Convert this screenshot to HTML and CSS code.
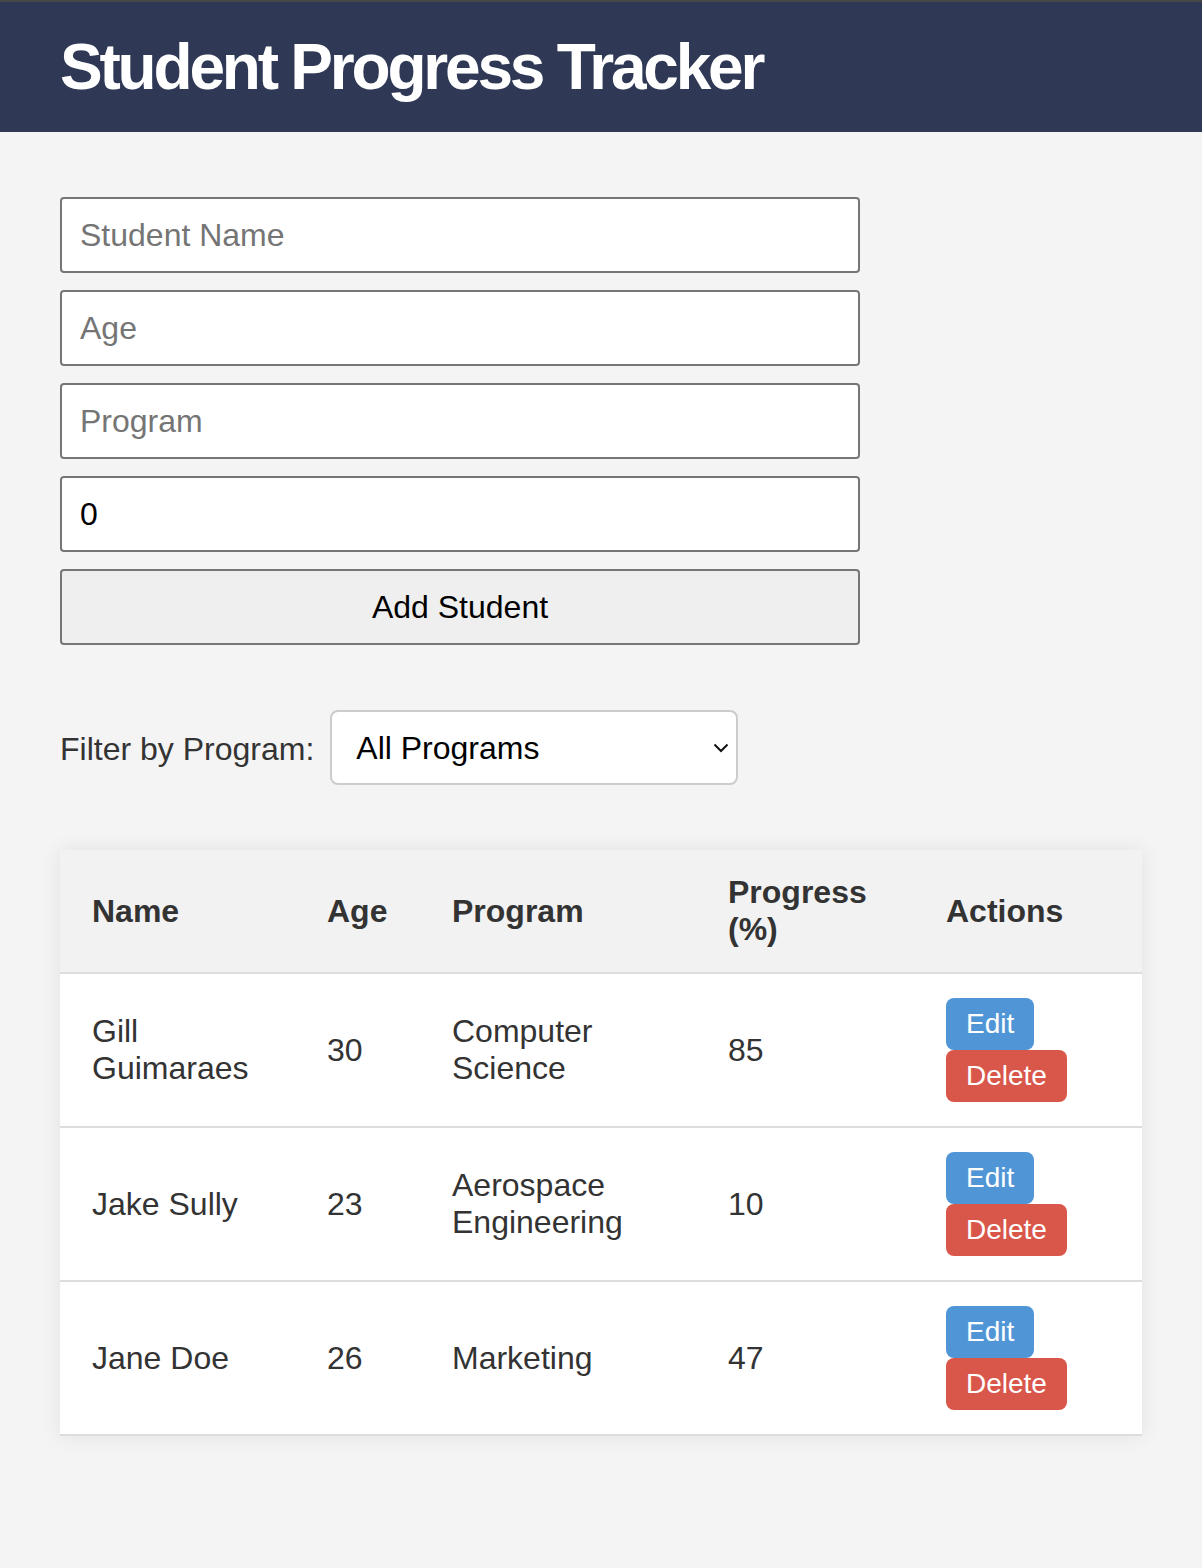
FILE: index.html
```html
<!DOCTYPE html>
<html lang="en">
<head>
<meta charset="utf-8">
<title>Student Progress Tracker</title>
<link rel="stylesheet" href="styles.css">
</head>
<body>
<header class="topbar">
  <h1 class="title">Student Progress Tracker</h1>
</header>
<main class="content">
  <form class="student-form">
    <input class="field" type="text" placeholder="Student Name">
    <input class="field" type="text" placeholder="Age">
    <input class="field" type="text" placeholder="Program">
    <input class="field" type="text" value="0">
    <button class="add-btn" type="button">Add Student</button>
  </form>
  <div class="filter">
    <label class="filter-label">Filter by Program:</label>
    <div class="select-wrap">
      <select class="select"><option>All Programs</option></select>
      <svg class="chevron" width="16" height="10" viewBox="0 0 16 10"><path d="M1.5 1.5 L8 8 L14.5 1.5" fill="none" stroke="#111" stroke-width="2"/></svg>
    </div>
  </div>
  <table class="students">
    <thead>
      <tr><th class="c-name">Name</th><th class="c-age">Age</th><th class="c-prog">Program</th><th class="c-pct">Progress (%)</th><th class="c-act">Actions</th></tr>
    </thead>
    <tbody>
      <tr><td>Gill Guimaraes</td><td>30</td><td>Computer Science</td><td>85</td><td><div class="actions"><button class="btn btn-edit">Edit</button><button class="btn btn-del">Delete</button></div></td></tr>
      <tr><td>Jake Sully</td><td>23</td><td>Aerospace Engineering</td><td>10</td><td><div class="actions"><button class="btn btn-edit">Edit</button><button class="btn btn-del">Delete</button></div></td></tr>
      <tr><td>Jane Doe</td><td>26</td><td>Marketing</td><td>47</td><td><div class="actions"><button class="btn btn-edit">Edit</button><button class="btn btn-del">Delete</button></div></td></tr>
    </tbody>
  </table>
</main>
</body>
</html>
```
FILE: styles.css
```css
html, body {
  margin: 0;
  padding: 0;
}
body {
  background: #f4f4f4;
  font-family: "Liberation Sans", Arial, sans-serif;
  color: #333;
  min-height: 1568px;
}
.topbar {
  background: #2f3854;
  border-top: 2px solid #474747;
  padding: 28px 60px;
}
.title {
  margin: 0;
  color: #fff;
  font-size: 64px;
  line-height: 74px;
  font-weight: bold;
  letter-spacing: -3.2px;
}
.content {
  padding: 65px 60px 60px;
}
.student-form {
  display: flex;
  flex-direction: column;
  gap: 17px;
  width: 800px;
}
.field, .add-btn {
  box-sizing: border-box;
  height: 76px;
  width: 800px;
  margin: 0;
  border: 2px solid #767676;
  border-radius: 4px;
  font-family: "Liberation Sans", Arial, sans-serif;
  font-size: 32px;
}
.field {
  background: #fff;
  padding: 0 18px;
  color: #000;
}
.field::placeholder {
  color: #757575;
}
.add-btn {
  background: #efefef;
  color: #000;
}
.filter {
  display: flex;
  align-items: center;
  gap: 16px;
  margin-top: 65px;
}
.filter-label {
  font-size: 32px;
  color: #333;
  padding-top: 3px;
}
.select-wrap {
  position: relative;
}
.select {
  appearance: none;
  -webkit-appearance: none;
  box-sizing: border-box;
  width: 408px;
  height: 75px;
  border: 2px solid #ccc;
  border-radius: 8px;
  background: #fff;
  padding: 0 24px;
  font-family: "Liberation Sans", Arial, sans-serif;
  font-size: 32px;
  color: #000;
}
.chevron {
  position: absolute;
  right: 9px;
  top: 33px;
}
.students {
  margin-top: 65px;
  width: 1082px;
  border-collapse: collapse;
  background: #fff;
  box-shadow: 0 0 20px rgba(0, 0, 0, 0.08);
  font-size: 32px;
}
.students th, .students td {
  text-align: left;
  vertical-align: middle;
  padding: 24px 32px;
  line-height: 37px;
  border-bottom: 2px solid #ddd;
}
.students th {
  background: #f2f2f2;
  font-weight: bold;
  color: #333;
}
.c-name { width: 171px; }
.c-age { width: 61px; }
.c-prog { width: 212px; }
.c-pct { width: 154px; }
.actions {
  display: flex;
  flex-direction: column;
  align-items: flex-start;
}
.btn {
  border: none;
  border-radius: 8px;
  color: #fff;
  font-family: "Liberation Sans", Arial, sans-serif;
  font-size: 28px;
  line-height: 32px;
  padding: 10px 20px;
  margin: 0;
}
.btn-edit { background: #5096d6; }
.btn-del { background: #d9574a; }
```
